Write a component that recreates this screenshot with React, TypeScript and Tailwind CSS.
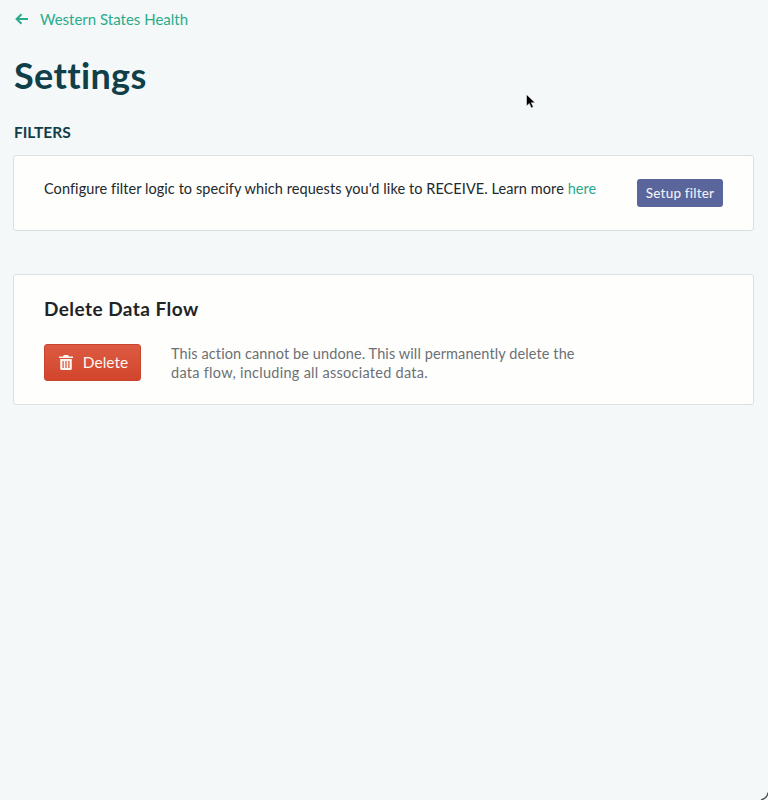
import React from "react";

export default function App() {
  return (
    <div className="relative h-[800px] w-[768px] overflow-hidden bg-[#f4f8f8] pl-[13px] pr-[14px] font-['Lato','Open_Sans',sans-serif]">
      <a className="flex h-[38px] items-center gap-[12px] pl-[2px] text-[15px] text-[#2bab8c]">
        <svg width="13" height="12" viewBox="0 0 13 12" fill="none" stroke="#2bab8c" strokeWidth="2">
          <path d="M13 6H2M6.5 1.2 1.6 6l4.9 4.8" />
        </svg>
        <span>Western States Health</span>
      </a>
      <h1 className="mt-[17px] pl-px text-[36px] leading-[40px] font-bold tracking-[0.35px] text-[#0f4049]">Settings</h1>
      <h2 className="mt-[27px] pl-px text-[15.5px] leading-[20px] font-bold text-[#0f4049]">FILTERS</h2>
      <section className="mt-[13px] flex h-[76px] items-center justify-between rounded-[3px] border border-[#dbe0e0] bg-[#fefefd] pl-[30px] pr-[30px]">
        <p className="-mt-[9px] text-[14.5px] tracking-[0.07px] text-[#22282b]">
          Configure filter logic to specify which requests you'd like to RECEIVE. Learn more <span className="text-[#2bab8c]">here</span>
        </p>
        <button className="h-[28px] w-[86px] rounded-[3px] bg-[#5a659b] text-[13.5px] font-medium tracking-[0.2px] text-[#edf0f5]">Setup filter</button>
      </section>
      <section className="mt-[43px] h-[131px] rounded-[3px] border border-[#dbe0e0] bg-[#fefefd] pl-[30px] pr-[30px] pt-[22px]">
        <h3 className="text-[19px] leading-[24px] font-bold tracking-[0.45px] text-[#1f2426]">Delete Data Flow</h3>
        <div className="mt-[23px] flex items-start gap-[30px]">
          <button className="flex h-[37px] w-[97px] items-center justify-center gap-[10px] rounded-[3px] border border-[#c9442d] bg-gradient-to-b from-[#dc5b42] to-[#d1452c] pl-[2px] text-[15.5px] text-[#fdf5f2]">
            <svg width="14" height="15" viewBox="0 0 14 15" fill="#fdf5f2">
              <path d="M5 0h4l1 1.5h4V3H0V1.5h4L5 0Z" />
              <path fillRule="evenodd" d="M1.2 4h11.6v9.5A1.5 1.5 0 0 1 11.3 15H2.7a1.5 1.5 0 0 1-1.5-1.5V4Zm2.3 2v7h1.2V6H3.5Zm2.9 0v7h1.2V6H6.4Zm2.9 0v7h1.2V6H9.3Z" />
            </svg>
            <span>Delete</span>
          </button>
          <p className="w-[430px] text-[14.5px] leading-[19px] tracking-[0.1px] text-[#6c7074]">
            This action cannot be undone. This will permanently delete the <span className="tracking-[0.27px]">data flow, including all associated data.</span>
          </p>
        </div>
      </section>
      <svg className="absolute left-[526px] top-[94px]" width="11" height="16" viewBox="0 0 11 16">
        <path d="M0.5 0.5v11.5l2.8-2.6 2 4.6 2-0.9-2-4.4h3.8Z" fill="#000" stroke="#fff" strokeWidth="0.5" />
      </svg>
      <svg className="absolute bottom-0 right-0" width="8" height="8" viewBox="0 0 8 8" fill="none">
        <path d="M8 0.5Q7.5 6 1 8" stroke="#555" strokeWidth="1.5" />
      </svg>
    </div>
  );
}
